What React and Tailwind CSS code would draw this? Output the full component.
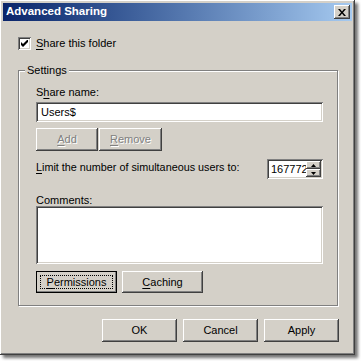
import { useState } from "react";

const font = { fontFamily: '"Liberation Sans", Arial, sans-serif' };

// classic 3d edges
const raised =
  "bg-[#d4d0c8] shadow-[inset_-1px_-1px_#404040,inset_1px_1px_#ffffff,inset_-2px_-2px_#808080,inset_2px_2px_#d4d0c8]";
const sunken =
  "bg-white shadow-[inset_1px_1px_#808080,inset_-1px_-1px_#ffffff,inset_2px_2px_#404040,inset_-2px_-2px_#d4d0c8]";

const Key = ({ children }) => <span className="underline underline-offset-[2px]">{children}</span>;

const Button = ({ children, className = "", disabled = false, isDefault = false }) => (
  <button
    className={`relative flex items-center justify-center text-[11px] leading-none ${raised} ${
      disabled ? "text-[#808080] [text-shadow:1px_1px_#ffffff]" : "text-black"
    } ${isDefault ? "outline outline-1 outline-black -outline-offset-1" : ""} ${className}`}
  >
    {isDefault && (
      <span className="absolute inset-[4px] border border-dotted border-black" />
    )}
    <span className="relative">{children}</span>
  </button>
);

const Arrow = ({ up }) => (
  <svg width="5" height="3" viewBox="0 0 5 3">
    {up ? <path d="M2.5 0 L5 3 L0 3 Z" fill="#000" /> : <path d="M0 0 L5 0 L2.5 3 Z" fill="#000" />}
  </svg>
);

export default function App() {
  const [shared, setShared] = useState(true);

  return (
    <div className="w-[361px] h-[361px] bg-white overflow-hidden" style={font}>
      <div className="w-[355px] h-[355px] p-[3px] bg-[#d4d0c8] flex flex-col shadow-[inset_-1px_-1px_#404040,inset_1px_1px_#ffffff,inset_-2px_-2px_#808080,inset_2px_2px_#d4d0c8,3px_3px_3px_rgba(0,0,0,0.55)]">
        {/* caption */}
        <div className="h-[18px] flex items-center justify-between pl-[3px] pr-[2px] bg-gradient-to-r from-[#0a246a] to-[#a6caf0]">
          <span className="text-white font-bold text-[11.5px] leading-none">Advanced Sharing</span>
          <button className={`w-[16px] h-[14px] flex items-center justify-center ${raised}`}>
            <svg width="8" height="7" viewBox="0 0 8 7">
              <path d="M0 0 L2 0 L4 2.5 L6 0 L8 0 L5 3.5 L8 7 L6 7 L4 4.5 L2 7 L0 7 L3 3.5 Z" fill="#000" />
            </svg>
          </button>
        </div>

        <div className="flex flex-col pl-[15px] pr-[14px] text-[11px] text-black">
          {/* share checkbox */}
          <label className="mt-[16px] flex items-center gap-[5px] h-[13px]" onClick={() => setShared((v) => !v)}>
            <span className={`w-[13px] h-[13px] flex items-center justify-center ${sunken}`}>
              {shared && (
                <svg width="7" height="7" viewBox="0 0 7 7">
                  <path d="M0 2 L0 5 L2 7 L7 2 L7 -1 L2 4 Z" fill="#000" />
                </svg>
              )}
            </span>
            <span className="leading-none">
              <Key>S</Key>hare this folder
            </span>
          </label>

          {/* settings group */}
          <div className="relative mt-[20px] h-[236px] border border-[#808080] shadow-[inset_1px_1px_#ffffff,1px_1px_#ffffff] pl-[17px] flex flex-col">
            <span className="absolute -top-[7px] left-[6px] px-[2px] bg-[#d4d0c8] leading-[13px]">Settings</span>

            <span className="mt-[15px] leading-[13px]">
              S<Key>h</Key>are name:
            </span>
            <div className={`mt-[3px] w-[287px] h-[20px] flex items-center pl-[5px] ${sunken}`}>Users$</div>

            <div className="mt-[6px] flex gap-[1px]">
              <Button disabled className="w-[62px] h-[23px]">
                <Key>A</Key>dd
              </Button>
              <Button disabled className="w-[63px] h-[23px]">
                <Key>R</Key>emove
              </Button>
            </div>

            <div className="mt-[8px] w-[287px] h-[20px] flex items-center justify-between">
              <span className="leading-none pb-[3px] text-[10.8px]">
                <Key>L</Key>imit the number of simultaneous users to:
              </span>
              <div className={`w-[56px] h-[20px] flex items-center p-[2px] ${sunken}`}>
                <div className="flex-1 overflow-hidden whitespace-nowrap pl-[2px] leading-none">16777215</div>
                <div className="w-[15px] h-[16px] flex flex-col">
                  <div className={`h-[8px] flex items-center justify-center ${raised}`}>
                    <Arrow up />
                  </div>
                  <div className={`h-[8px] flex items-center justify-center ${raised}`}>
                    <Arrow />
                  </div>
                </div>
              </div>
            </div>

            <span className="mt-[15px] leading-[12px]">
              C<Key>o</Key>mments:
            </span>
            <div className={`w-[287px] h-[58px] ${sunken}`} />

            <div className="mt-[7px] flex gap-[5px]">
              <Button isDefault className="w-[81px] h-[22px]">
                <Key>P</Key>ermissions
              </Button>
              <Button className="w-[81px] h-[22px]">
                <Key>C</Key>aching
              </Button>
            </div>
          </div>

          {/* dialog buttons */}
          <div className="mt-[13px] mr-[-1px] flex justify-end gap-[6px]">
            <Button className="w-[75px] h-[23px]">OK</Button>
            <Button className="w-[75px] h-[23px]">Cancel</Button>
            <Button className="w-[75px] h-[23px]">Apply</Button>
          </div>
        </div>
      </div>
    </div>
  );
}
